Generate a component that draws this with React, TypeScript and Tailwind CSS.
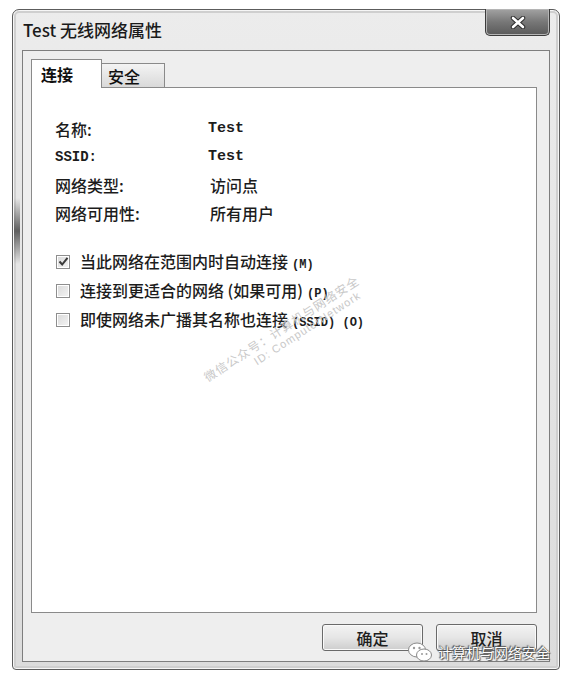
const CJK = "font-['Noto_Sans_CJK_SC','Noto_Sans',sans-serif]";
const MONO = "font-['Liberation_Mono','DejaVu_Sans_Mono',monospace]";

type Row = { label: string; value: string; mono?: boolean; monoLabel?: boolean };

const ROWS: Row[] = [
  { label: "名称:", value: "Test", mono: true },
  { label: "SSID:", value: "Test", mono: true, monoLabel: true },
  { label: "网络类型:", value: "访问点" },
  { label: "网络可用性:", value: "所有用户" }
];

const OPTIONS = [
  { text: "当此网络在范围内时自动连接", key: "(M)", checked: true },
  { text: "连接到更适合的网络 (如果可用)", key: "(P)", checked: false },
  { text: "即使网络未广播其名称也连接", key: "(SSID) (O)", checked: false }
];

function CheckBox({ checked }: { checked: boolean }) {
  return (
    <span className="ml-[1px] flex h-[14px] w-[14px] shrink-0 items-center justify-center border border-[#8e8e8e] bg-gradient-to-br from-[#d9d9d9] to-[#f4f4f4] shadow-[inset_0_0_0_1px_#fff]">
      {checked ? (
        <svg width="11" height="11" viewBox="0 0 11 11">
          <path d="M1.5 5.5 L4.2 8.5 L9.5 1.8" fill="none" stroke="#3a3a3a" strokeWidth="2" />
        </svg>
      ) : null}
    </span>
  );
}

function DialogButton({ label }: { label: string }) {
  return (
    <button
      type="button"
      className={`h-[27px] w-[101px] rounded-[3px] border border-[#6a6a6a] bg-gradient-to-b from-[#f3f3f3] via-[#e6e6e6] to-[#cdcdcd] text-[16px] font-medium text-[#1e1e1e] shadow-[inset_0_0_0_1px_#fafafa] ${CJK}`}
    >
      {label}
    </button>
  );
}

function WeChatMark() {
  return (
    <svg width="26" height="22" viewBox="0 0 26 22">
      <ellipse cx="10" cy="9" rx="8.5" ry="7" fill="#fff" stroke="#8a8a8a" strokeWidth="1" />
      <ellipse cx="17" cy="14" rx="7.5" ry="6" fill="#fff" stroke="#8a8a8a" strokeWidth="1" />
      <circle cx="7" cy="7" r="1.2" fill="#9a9a9a" />
      <circle cx="12.5" cy="7" r="1.2" fill="#9a9a9a" />
      <circle cx="15" cy="13" r="1" fill="#9a9a9a" />
      <circle cx="19.5" cy="13" r="1" fill="#9a9a9a" />
    </svg>
  );
}

export default function App() {
  return (
    <div className={`relative h-[678px] w-[566px] overflow-hidden bg-white pl-[12px] pt-[9px] ${CJK}`}>
      <div className="relative flex h-[661px] w-[548px] flex-col rounded-t-[7px] rounded-b-[4px] border border-[#5c5c5c] bg-gradient-to-b from-[#ececec] via-[#e3e3e3] to-[#dcdcdc] px-[9px] pb-[7px] shadow-[inset_0_0_0_1px_#f6f6f6,inset_0_0_0_3px_#cfcfcf]">
        <div className="absolute left-[1px] top-[188px] h-[66px] w-[6px] bg-gradient-to-b from-transparent via-[#5e5e5e] to-transparent" />

        <div className="flex h-[40px] items-center pl-[1px] text-[17px] font-medium text-[#1a1a1a]">
          Test 无线网络属性
        </div>

        <div className="absolute right-[9px] top-[-1px] flex h-[27px] w-[65px] items-center justify-center rounded-b-[5px] border border-t-0 border-[#3c3c3c] bg-gradient-to-b from-[#a3a3a3] via-[#777] to-[#5a5a5a] shadow-[inset_0_0_0_1px_#b5b5b5]">
          <svg width="16" height="13" viewBox="0 0 16 13">
            <path d="M3 2 L13 11 M13 2 L3 11" stroke="#2c2c2c" strokeWidth="4.5" strokeLinecap="round" />
            <path d="M3 2 L13 11 M13 2 L3 11" stroke="#fff" strokeWidth="2.6" strokeLinecap="round" />
          </svg>
        </div>

        <div className="flex flex-1 flex-col border border-[#7e7e7e] bg-[#eeeeee] pl-[8px] pr-[12px] pt-[8px]">
          <div className="flex h-[28px] items-end">
            <div className="relative z-10 -mb-px flex h-[29px] w-[71px] items-center border border-b-0 border-[#8a8a8a] bg-white pl-[9px] text-[16px] font-bold text-[#111]">
              连接
            </div>
            <div className="flex h-[24px] w-[63px] items-center border border-b-0 border-l-0 border-[#8a8a8a] bg-gradient-to-b from-[#f4f4f4] to-[#d9d9d9] pl-[6px] text-[16px] font-medium text-[#111]">
              安全
            </div>
          </div>

          <div className="h-[526px] border border-[#8a8a8a] bg-white pl-[23px] pt-[27px] text-[16px] font-medium text-[#1c1c1c]">
            <div className="grid grid-cols-[153px_1fr]">
              {ROWS.map((row) => (
                <div key={row.label} className="contents">
                  <div className={`h-[28px] leading-[28px] ${row.monoLabel ? `${MONO} text-[14px] font-bold` : ""}`}>
                    {row.label}
                  </div>
                  <div className={`h-[28px] leading-[28px] ${row.mono ? `${MONO} text-[15px] font-bold` : "pl-[2px]"}`}>
                    {row.value}
                  </div>
                </div>
              ))}
            </div>

            <div className="mt-[20px] flex flex-col">
              {OPTIONS.map((opt) => (
                <div key={opt.key} className="flex h-[29px] items-center gap-[10px]">
                  <CheckBox checked={opt.checked} />
                  <span className="whitespace-nowrap">
                    {opt.text}
                    <span className={`ml-[4px] ${MONO} text-[12px] font-bold`}>{opt.key}</span>
                  </span>
                </div>
              ))}
            </div>
          </div>

          <div className="flex flex-1 items-start justify-end gap-[13px] pt-[11px]">
            <DialogButton label="确定" />
            <DialogButton label="取消" />
          </div>
        </div>
      </div>

      <div className="pointer-events-none absolute left-[205px] top-[369px] origin-left -rotate-[33deg] whitespace-nowrap text-[12px] tracking-[1px] text-[#c8c8c8]">
        微信公众号：计算机与网络安全
      </div>
      <div className="pointer-events-none absolute left-[255px] top-[354px] origin-left -rotate-[33deg] whitespace-nowrap font-['Liberation_Sans',sans-serif] text-[11px] tracking-[1px] text-[#c8c8c8]">
        ID: ComputerNetwork
      </div>

      <div className="pointer-events-none absolute left-[407px] top-[641px] flex items-center gap-[5px]">
        <WeChatMark />
        <span className="text-[14px] text-white [text-shadow:0_0_1px_#333,1px_1px_1px_#555,-1px_-1px_1px_#555]">
          计算机与网络安全
        </span>
      </div>
    </div>
  );
}
